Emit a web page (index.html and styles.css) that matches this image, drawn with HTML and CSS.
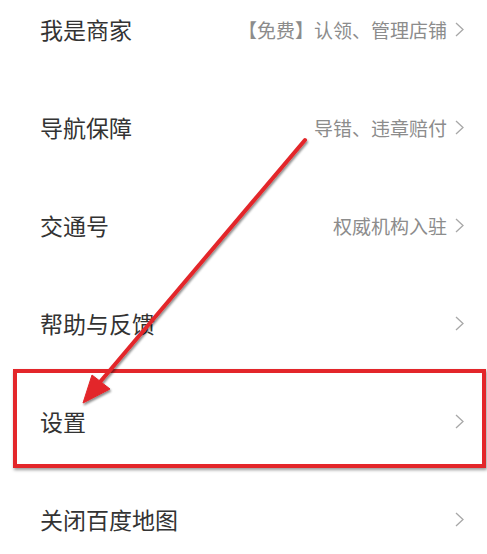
FILE: index.html
```html
<!DOCTYPE html>
<html lang="zh-CN">
<head>
    <meta charset="UTF-8">
    <meta name="viewport" content="width=device-width, initial-scale=1.0">
    <title>更多</title>
    <link rel="stylesheet" href="styles.css">
</head>
<body>
    <div class="menu-list">
        <div class="menu-row">
            <span class="menu-label">我是商家</span>
            <span class="menu-extra">【免费】认领、管理店铺<svg class="chevron" viewBox="0 0 9 15"><polyline points="1,1 8,7.5 1,14"/></svg></span>
        </div>
        <div class="menu-row">
            <span class="menu-label">导航保障</span>
            <span class="menu-extra">导错、违章赔付<svg class="chevron" viewBox="0 0 9 15"><polyline points="1,1 8,7.5 1,14"/></svg></span>
        </div>
        <div class="menu-row">
            <span class="menu-label">交通号</span>
            <span class="menu-extra">权威机构入驻<svg class="chevron" viewBox="0 0 9 15"><polyline points="1,1 8,7.5 1,14"/></svg></span>
        </div>
        <div class="menu-row">
            <span class="menu-label">帮助与反馈</span>
            <span class="menu-extra"><svg class="chevron" viewBox="0 0 9 15"><polyline points="1,1 8,7.5 1,14"/></svg></span>
        </div>
        <div class="menu-row highlight">
            <span class="menu-label">设置</span>
            <span class="menu-extra"><svg class="chevron" viewBox="0 0 9 15"><polyline points="1,1 8,7.5 1,14"/></svg></span>
        </div>
        <div class="menu-row">
            <span class="menu-label">关闭百度地图</span>
            <span class="menu-extra"><svg class="chevron" viewBox="0 0 9 15"><polyline points="1,1 8,7.5 1,14"/></svg></span>
        </div>
    </div>

    <!-- annotation arrow -->
    <svg class="arrow" width="487" height="554" viewBox="0 0 487 554">
        <defs>
            <filter id="shade" x="-20%" y="-20%" width="140%" height="140%">
                <feDropShadow dx="1" dy="2" stdDeviation="1.2" flood-color="#000" flood-opacity="0.45"/>
            </filter>
        </defs>
        <g filter="url(#shade)" fill="#e3262a" stroke="#e3262a">
            <line x1="305" y1="140" x2="100" y2="382" stroke-width="4" stroke-linecap="round"/>
            <polygon points="83,403 92,375 110,389" stroke-width="1" stroke-linejoin="round"/>
        </g>
    </svg>
</body>
</html>
```

FILE: styles.css
```css
body {
    margin: 0;
    background: #fff;
    font-family: "Noto Sans CJK SC", "Noto Sans", sans-serif;
    width: 487px;
    height: 554px;
    overflow: hidden;
    position: relative;
}

.menu-list {
    margin-top: -20px;
}

.menu-row {
    display: flex;
    justify-content: space-between;
    align-items: center;
    height: 98px;
    padding: 0 23px 0 40px;
    position: relative;
}

.menu-label {
    font-size: 23px;
    color: #333;
}

.menu-extra {
    display: flex;
    align-items: center;
    font-size: 19px;
    color: #8c8c8c;
}

.chevron {
    width: 9px;
    height: 15px;
    margin-left: 8px;
    fill: none;
    stroke: #a8a8a8;
    stroke-width: 1.3;
}

.highlight::after {
    content: "";
    position: absolute;
    left: 13px;
    right: 1px;
    top: -3px;
    bottom: 2px;
    border: 4px solid #e3262a;
    box-shadow: 1px 2px 3px rgba(0, 0, 0, 0.4);
}

.arrow {
    position: absolute;
    left: 0;
    top: 0;
    pointer-events: none;
}
```
